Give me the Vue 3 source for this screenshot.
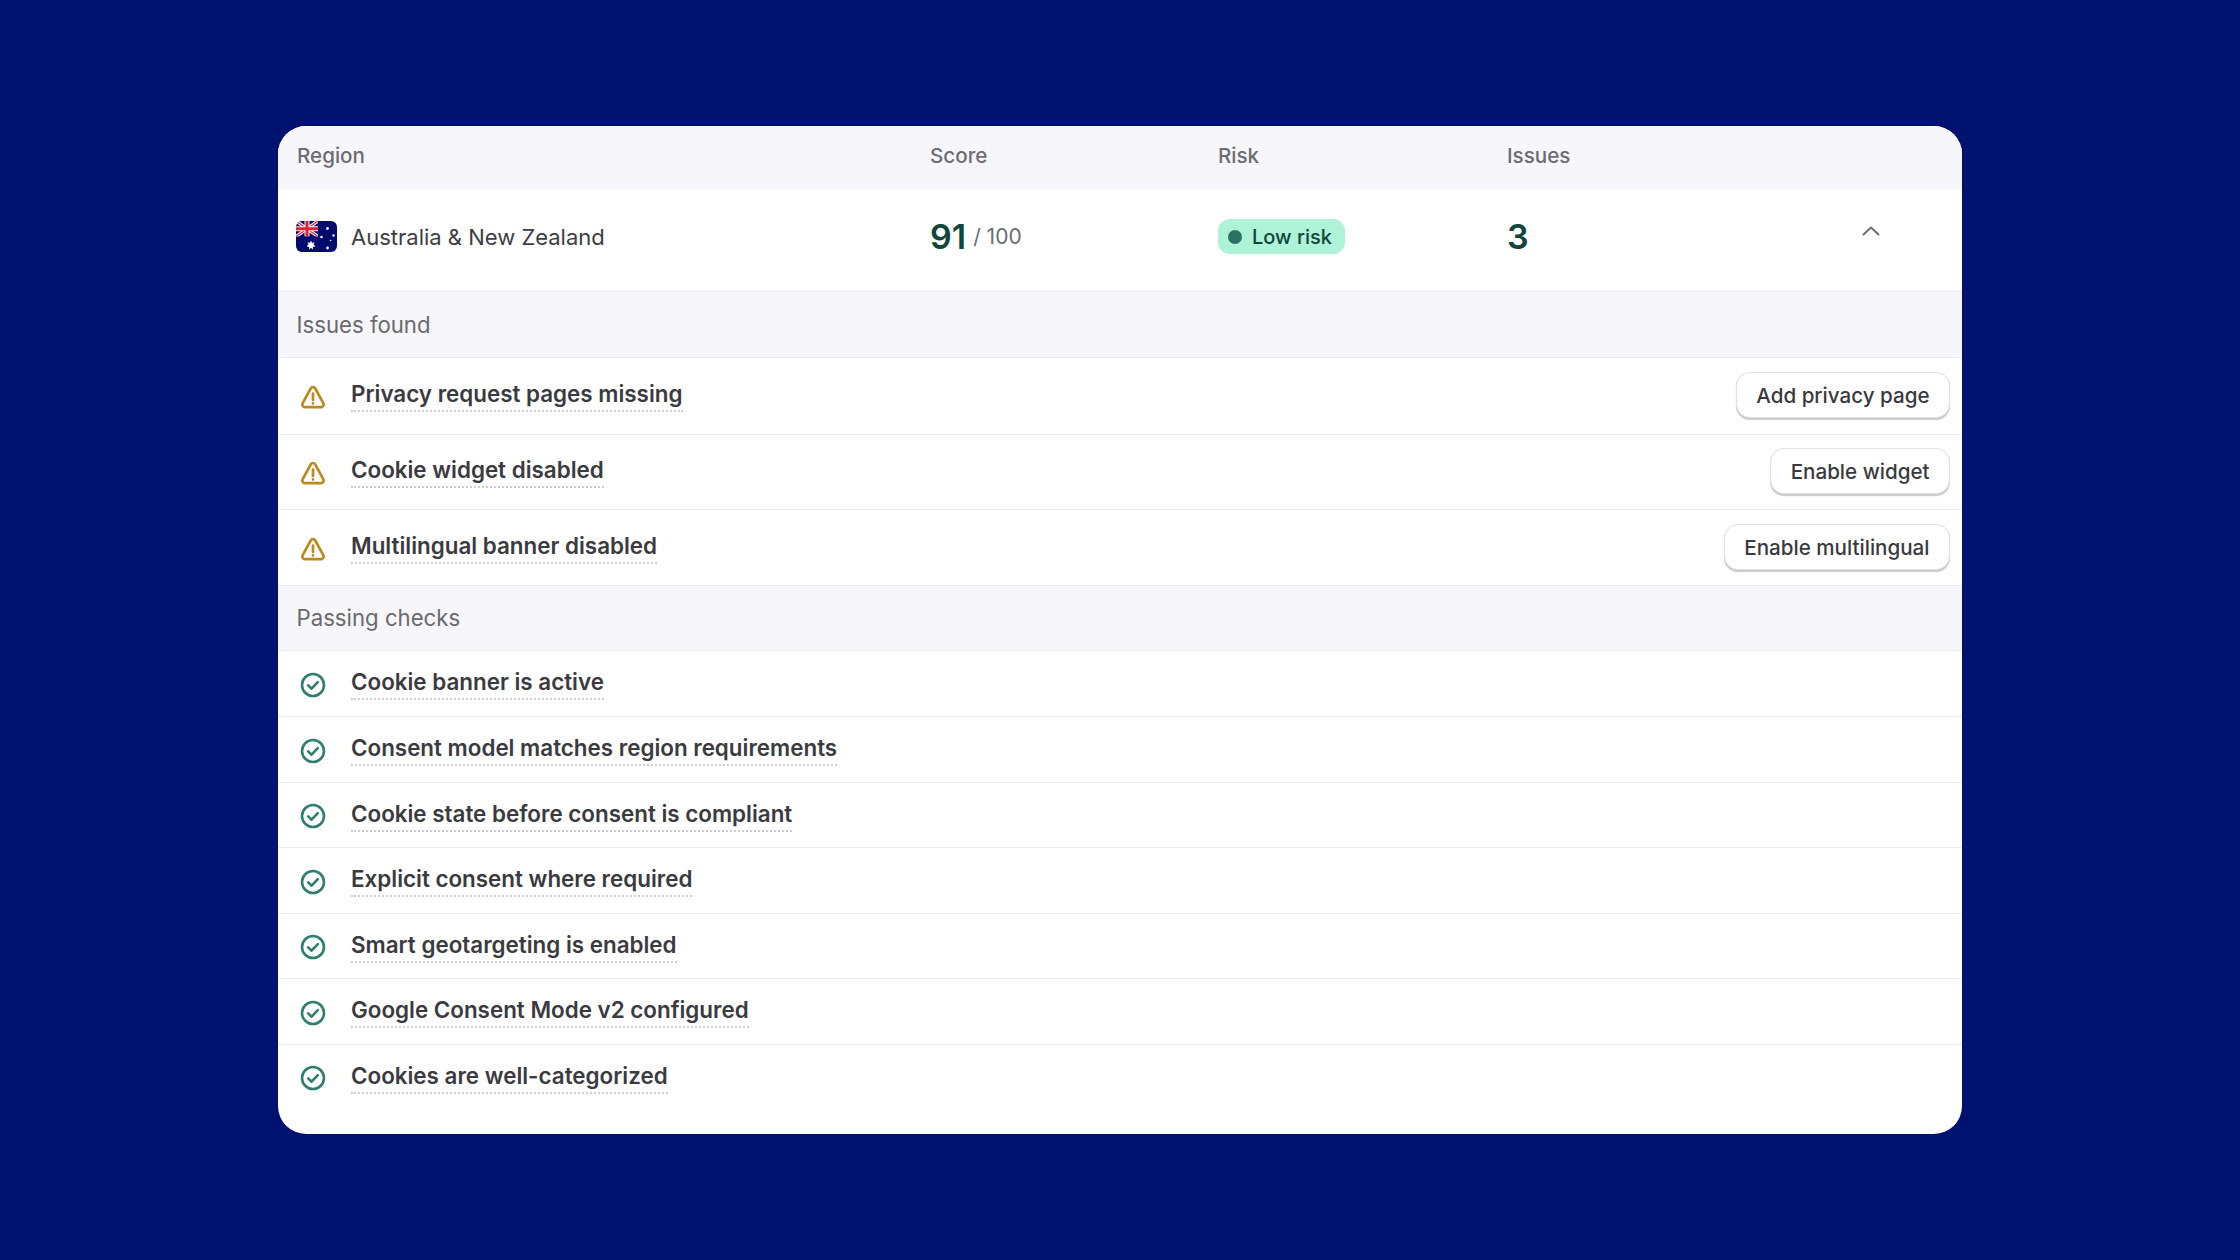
<template>
  <main class="page">
    <section class="card">
      <header class="grid head">
        <span>Region</span><span>Score</span><span>Risk</span><span>Issues</span><span></span>
      </header>

      <div class="grid region">
        <div class="name">
          <svg class="flag" viewBox="0 0 41 31" aria-hidden="true">
            <rect width="41" height="31" rx="6" fill="#010b6e" />
            <g clip-path="url(#uj)">
              <path d="M0 0 22 15.5M22 0 0 15.5" stroke="#eef0f7" stroke-width="3.4" />
              <path d="M0 0 22 15.5M22 0 0 15.5" stroke="#d8303c" stroke-width="1.2" />
              <path d="M11 0V15.5M0 7.75H22" stroke="#f4f4f8" stroke-width="5" />
              <path d="M11 0V15.5M0 7.75H22" stroke="#e0222f" stroke-width="3" />
            </g>
            <defs><clipPath id="uj"><path d="M6 0H22V15.5H0V6A6 6 0 0 1 6 0Z" /></clipPath></defs>
            <path d="M15 19.5l1.1 2.4 2.6-.6-1.2 2.3 2 1.7-2.6.6v2.6L15 26.8l-1.9 1.7v-2.6l-2.6-.6 2-1.7-1.2-2.3 2.6.6Z" fill="#fff" />
            <g fill="#eef0fa">
              <circle cx="31.5" cy="7.5" r="1.4" /><circle cx="25.5" cy="16" r="1.3" />
              <circle cx="37.5" cy="14.5" r="1.2" /><circle cx="34.5" cy="19.5" r=".8" />
              <circle cx="31.5" cy="27" r="1.4" />
            </g>
          </svg>
          <span>Australia &amp; New Zealand</span>
        </div>
        <div class="score"><b>91</b><span>/ 100</span></div>
        <div><span class="badge"><i></i>Low risk</span></div>
        <div class="count">3</div>
        <svg class="chevron" viewBox="0 0 18 10" aria-hidden="true"><path d="M1.5 8.5 9 1.5l7.5 7" /></svg>
      </div>

      <h2 class="section">Issues found</h2>
      <div v-for="item in issues" :key="item.label" class="row issue">
        <svg class="icon" viewBox="0 0 26 26" aria-hidden="true">
          <path class="warn" d="M10.8 4.3 2.7 19.2a2.6 2.6 0 0 0 2.3 3.9h16a2.6 2.6 0 0 0 2.3-3.9L15.2 4.3a2.5 2.5 0 0 0-4.4 0Z" />
          <path class="warn" d="M13 9.5v6.5M13 19.4v.1" />
        </svg>
        <span class="label">{{ item.label }}</span>
        <button class="action" type="button">{{ item.action }}</button>
      </div>

      <h2 class="section second">Passing checks</h2>
      <div v-for="label in checks" :key="label" class="row pass">
        <svg class="icon" viewBox="0 0 26 26" aria-hidden="true">
          <circle class="ok" cx="13" cy="13" r="11" />
          <path class="ok" d="m8.2 13.4 3.4 3.3 6.2-6.6" />
        </svg>
        <span class="label">{{ label }}</span>
      </div>
    </section>
  </main>
</template>

<script setup>
const issues = [
  { label: 'Privacy request pages missing', action: 'Add privacy page' },
  { label: 'Cookie widget disabled', action: 'Enable widget' },
  { label: 'Multilingual banner disabled', action: 'Enable multilingual' },
]
const checks = [
  'Cookie banner is active',
  'Consent model matches region requirements',
  'Cookie state before consent is compliant',
  'Explicit consent where required',
  'Smart geotargeting is enabled',
  'Google Consent Mode v2 configured',
  'Cookies are well-categorized',
]
</script>

<style>
html, body { margin: 0; background: #00126f; }
</style>

<style scoped>
.page {
  width: 2240px;
  height: 1260px;
  box-sizing: border-box;
  padding: 126px 278px 0;
  background: #00126f;
  font-family: Inter, "Liberation Sans", sans-serif;
  color: #39393e;
}
.card {
  height: 1008px;
  border-radius: 28px;
  background: #fff;
  overflow: hidden;
}
.grid {
  display: grid;
  grid-template-columns: 633px 288px 289px 1fr 64px;
  align-items: center;
  box-sizing: border-box;
  padding: 0 28px 0 19px;
}
.head {
  height: 63px;
  padding-bottom: 4px;
  background: #f7f6fa;
  font-size: 20.6px;
  font-weight: 500;
  color: #6c6c71;
}
.region { height: 102px; padding-bottom: 7px; }
.name {
  display: flex;
  align-items: center;
  gap: 14px;
  margin-left: -1px;
  font-size: 22px;
  color: #3d3d42;
}
.flag { width: 41px; height: 31px; flex: none; }
.score { display: flex; align-items: center; gap: 7px; color: #6c6c71; font-size: 21px; }
.score b, .count { font-size: 34px; font-weight: 600; color: #10463c; }
.badge {
  display: inline-flex;
  align-items: center;
  gap: 10px;
  height: 35px;
  padding: 0 13px 0 10px;
  border-radius: 12px;
  background: #aef2d8;
  color: #10463c;
  font-size: 20px;
  font-weight: 500;
}
.badge i { width: 14px; height: 14px; border-radius: 50%; background: #2b7360; }
.chevron {
  width: 18px;
  height: 10px;
  justify-self: end;
  margin: -11px 54px 0 0;
  fill: none;
  stroke: #6d6d72;
  stroke-width: 2;
  stroke-linecap: round;
  stroke-linejoin: round;
}
.section {
  display: flex;
  align-items: center;
  height: 67px;
  box-sizing: border-box;
  margin: 0;
  padding: 0 18.5px;
  background: #f7f6fa;
  border-top: 1px solid #ebebee;
  border-bottom: 1px solid #ebebee;
  font-size: 22.2px;
  font-weight: 400;
  color: #69696e;
}
.section.second { height: 66px; }
.row {
  display: flex;
  align-items: center;
  box-sizing: border-box;
  padding: 0 12px 0 22px;
}
.issue { height: 75.67px; }
.issue + .issue { border-top: 1px solid #ebebee; }
.pass { height: 65.5px; }
.pass + .pass { border-top: 1px solid #ebebee; }
.icon { width: 26px; height: 26px; flex: none; margin-right: 25px; position: relative; top: 1px; }
.warn { fill: none; stroke: #b98a1e; stroke-width: 2.7; stroke-linecap: round; stroke-linejoin: round; }
.ok { fill: none; stroke: #2f7f70; stroke-width: 2.6; stroke-linecap: round; stroke-linejoin: round; }
.label {
  font-size: 22.4px;
  font-weight: 600;
  line-height: 30px;
  color: #3a3a3f;
  border-bottom: 2px dotted #cdcdd2;
  padding-bottom: 1px;
}
.action {
  margin-left: auto;
  margin-top: -1px;
  height: 46px;
  padding: 0 19.5px;
  border: 1px solid #e2e2e5;
  border-radius: 14px;
  background: #fff;
  box-shadow: 0 1.5px 1px rgba(60, 60, 70, 0.28);
  font: 500 20.6px Inter, "Liberation Sans", sans-serif;
  color: #39393e;
}
</style>
